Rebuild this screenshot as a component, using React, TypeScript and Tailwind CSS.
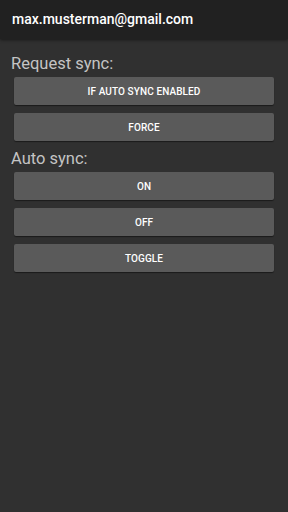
const font = { fontFamily: 'Roboto, "Noto Sans", sans-serif' }

function Btn({ label }: { label: string }) {
  return (
    <button className="flex h-[28px] w-full items-center justify-center rounded-[2px] bg-[#5a5a5a] text-[10px] font-medium tracking-[0.1px] text-white shadow-[0_1px_1px_rgba(0,0,0,0.45)]">
      {label}
    </button>
  )
}

export default function App() {
  return (
    <div className="flex h-[512px] w-[288px] flex-col bg-[#303030]" style={font}>
      <div className="flex h-[39px] shrink-0 items-center bg-[#212121] px-[12px] shadow-[0_1px_3px_rgba(0,0,0,0.5)]">
        <span className="text-[14px] font-medium text-white">max.musterman@gmail.com</span>
      </div>
      <div className="flex flex-col px-[14px]">
        <div className="-mx-[3px] mt-[12px] text-[16.5px] leading-[26px] text-[#c4c4c4]">Request sync:</div>
        <div className="flex flex-col gap-[8px]">
          <Btn label="IF AUTO SYNC ENABLED" />
          <Btn label="FORCE" />
        </div>
        <div className="-mx-[3px] mt-[5px] text-[16.5px] leading-[26px] text-[#c4c4c4]">Auto sync:</div>
        <div className="flex flex-col gap-[8px]">
          <Btn label="ON" />
          <Btn label="OFF" />
          <Btn label="TOGGLE" />
        </div>
      </div>
    </div>
  )
}
